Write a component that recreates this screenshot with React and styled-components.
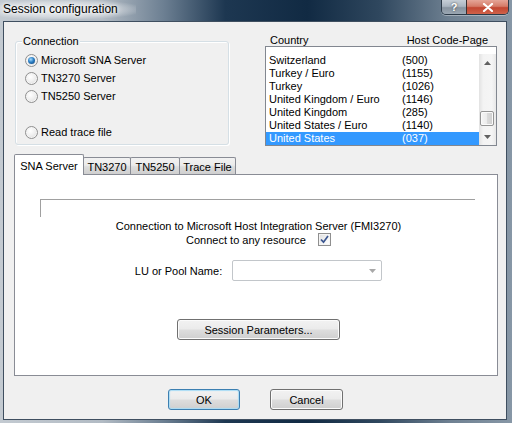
import React from 'react';
import styled, { createGlobalStyle } from 'styled-components';

const GlobalStyle = createGlobalStyle`
  html, body {
    margin: 0;
    padding: 0;
  }
  body {
    width: 512px;
    height: 423px;
    overflow: hidden;
    font-family: "Liberation Sans", Arial, sans-serif;
    font-size: 11px;
    color: #000;
  }
`;

const Window = styled.div`
  width: 512px;
  height: 423px;
  display: flex;
  flex-direction: column;
  box-sizing: border-box;
  background: linear-gradient(
    90deg,
    #c3cad1 0%,
    #b2bbc4 20%,
    #6c7f92 32%,
    #1d3751 44%,
    #112a43 60%,
    #2f475e 74%,
    #6f8192 88%,
    #8797a6 100%
  );
`;

const TitleBar = styled.div`
  height: 21px;
  display: flex;
  align-items: flex-start;
  flex-shrink: 0;
`;

const Title = styled.span`
  font-size: 12px;
  line-height: 19px;
  padding: 0 18px 0 3px;
  background: radial-gradient(ellipse at 45% 50%, rgba(255, 255, 255, 0.75) 0%, rgba(255, 255, 255, 0.35) 55%, rgba(255, 255, 255, 0) 80%);
  text-shadow: 0 0 6px #fff, 0 0 3px #fff;
`;

const CaptionButtons = styled.div`
  margin-left: auto;
  margin-right: 3px;
  display: flex;
  border: 1px solid #2c3a48;
  border-top: none;
  border-radius: 0 0 5px 5px;
  overflow: hidden;
  box-shadow: 0 1px 0 rgba(255, 255, 255, 0.35);
`;

const CaptionButton = styled.div`
  width: ${(p) => (p.$close ? 42 : 24)}px;
  height: 14px;
  display: flex;
  align-items: center;
  justify-content: center;
  box-sizing: border-box;
  color: #fff;
  font-weight: bold;
  font-size: 11px;
  line-height: 14px;
  text-shadow: 0 0 2px #333;
  border-left: ${(p) => (p.$close ? '1px solid #3a3030' : 'none')};
  background: ${(p) =>
    p.$close
      ? 'linear-gradient(#e5a597 0%, #d57b68 45%, #c24631 55%, #d0624a 100%)'
      : 'linear-gradient(#c6ced6 0%, #aab5c0 45%, #87939f 55%, #9ba7b3 100%)'};
`;

const Client = styled.div`
  flex: 1;
  margin: 0 5px 3px 3px;
  border: 1px solid #3f4f60;
  background: #f0f0f0;
  display: flex;
  flex-direction: column;
  padding: 0 8px 0 10px;
  box-sizing: border-box;
`;

const TopRow = styled.div`
  display: flex;
  align-items: flex-start;
`;

const GroupBox = styled.div`
  position: relative;
  margin: 19px 0 0 1px;
  width: 214px;
  height: 104px;
  box-sizing: border-box;
  border: 1px solid #d5dfe5;
  border-radius: 3px;
  box-shadow: inset 1px 1px 0 #fff, 1px 1px 0 #fff;
  padding: 9px 0 0 9px;
`;

const GroupLegend = styled.span`
  position: absolute;
  top: -7px;
  left: 6px;
  padding: 0 1px;
  line-height: 13px;
  background: #f0f0f0;
`;

const RadioRow = styled.label`
  display: flex;
  align-items: center;
  gap: 3px;
  height: 18px;
  margin-top: ${(p) => (p.$gap ? 18 : 0)}px;
`;

const RadioDot = styled.span`
  position: relative;
  width: 13px;
  height: 13px;
  box-sizing: border-box;
  border-radius: 50%;
  border: 1px solid #8f8f8f;
  background: radial-gradient(circle at 40% 35%, #ffffff 0%, #f0f0f0 45%, #d4d4d4 100%);
  box-shadow: inset 0 0 0 1px #f4f4f4;

  &::after {
    content: '';
    display: ${(p) => (p.$checked ? 'block' : 'none')};
    position: absolute;
    left: 2px;
    top: 2px;
    width: 7px;
    height: 7px;
    border-radius: 50%;
    background: radial-gradient(circle at 40% 35%, #a6dcff 0%, #2c7fc4 45%, #0f3e73 100%);
  }
`;

const RightColumn = styled.div`
  margin: 13px 0 0 36px;
  width: 232px;
  display: flex;
  flex-direction: column;
`;

const ListHeader = styled.div`
  display: flex;
  justify-content: space-between;
  height: 11px;
  line-height: 11px;
  padding: 0 9px 0 5px;
`;

const ListBox = styled.div`
  height: 100px;
  box-sizing: border-box;
  border: 1px solid #828790;
  background: #fff;
  padding-top: 7px;
  display: flex;
`;

const Rows = styled.div`
  flex: 1;
  display: flex;
  flex-direction: column;
`;

const Row = styled.div`
  display: flex;
  height: 13px;
  line-height: 13px;
  padding-left: 3px;
  background: ${(p) => (p.$selected ? '#3399ff' : 'transparent')};
  color: ${(p) => (p.$selected ? '#fff' : '#000')};
`;

const RowName = styled.span`
  width: 133px;
`;

const ScrollBar = styled.div`
  width: 17px;
  display: flex;
  flex-direction: column;
  background: linear-gradient(90deg, #e2e2e2 0%, #f3f3f3 25%, #f5f5f5 75%, #e8e8e8 100%);
`;

const ScrollArrow = styled.div`
  height: 17px;
  display: flex;
  align-items: center;
  justify-content: center;
`;

const Track = styled.div`
  flex: 1;
  display: flex;
  flex-direction: column;
`;

const Thumb = styled.div`
  margin: auto 2px 2px 1px;
  height: 15px;
  box-sizing: border-box;
  border: 1px solid #959595;
  border-radius: 2px;
  background: linear-gradient(90deg, #f6f6f6 0%, #ebebeb 50%, #dbdbdb 51%, #cfcfcf 100%);
  box-shadow: inset 0 0 0 1px #fafafa;
`;

const TabStrip = styled.div`
  margin-top: 8px;
  height: 21px;
  display: flex;
  align-items: flex-end;
  margin-bottom: -1px;
  position: relative;
  z-index: 1;
`;

const Tab = styled.div`
  width: ${(p) => p.$w}px;
  height: ${(p) => (p.$active ? 21 : 17)}px;
  margin-bottom: ${(p) => (p.$active ? 0 : 1)}px;
  margin-left: ${(p) => (p.$first ? 0 : -1)}px;
  box-sizing: border-box;
  border: 1px solid #898c95;
  border-bottom: none;
  border-radius: 2px 2px 0 0;
  display: flex;
  align-items: center;
  justify-content: center;
  padding-top: ${(p) => (p.$active ? 2 : 1)}px;
  background: ${(p) =>
    p.$active ? '#fff' : 'linear-gradient(#f2f2f2 0%, #ebebeb 45%, #dddddd 55%, #cfcfcf 100%)'};
`;

const Panel = styled.div`
  height: 202px;
  box-sizing: border-box;
  border: 1px solid #898c95;
  background: #fff;
  display: flex;
  flex-direction: column;
  align-items: center;
  padding-left: 5px;
`;

const SectionRule = styled.div`
  align-self: stretch;
  height: 18px;
  margin: 24px 22px 0 20px;
  box-sizing: border-box;
  border-top: 1px solid #a0a0a0;
  border-left: 1px solid #a0a0a0;
`;

const Caption = styled.div`
  margin-top: 3px;
  line-height: 13px;
`;

const FieldRow = styled.div`
  display: flex;
  align-items: center;
  gap: ${(p) => p.$gap}px;
  margin-top: ${(p) => p.$top}px;
`;

const CheckBox = styled.span`
  width: 13px;
  height: 13px;
  box-sizing: border-box;
  border: 1px solid #8f8f8f;
  background: linear-gradient(135deg, #dcdcdc 0%, #f5f5f5 60%, #ffffff 100%);
  box-shadow: inset 0 0 0 1px #f4f4f4;
  display: flex;
  align-items: center;
  justify-content: center;
`;

const Combo = styled.div`
  width: 150px;
  height: 21px;
  box-sizing: border-box;
  border: 1px solid #c2c6ca;
  border-radius: 2px;
  background: #fff;
  display: flex;
  align-items: center;
  justify-content: flex-end;
  padding-right: 5px;
`;

const PushButton = styled.div`
  width: ${(p) => p.$w}px;
  height: 21px;
  box-sizing: border-box;
  border: 1px solid ${(p) => (p.$default ? '#3c7fb1' : '#707070')};
  border-radius: 3px;
  background: linear-gradient(#f2f2f2 0%, #ebebeb 48%, #dddddd 52%, #cfcfcf 100%);
  box-shadow: ${(p) => (p.$default ? 'inset 0 0 1px 1px #a9dcf5' : 'inset 0 0 0 1px #fbfbfb')};
  display: flex;
  align-items: center;
  justify-content: center;
  margin-top: ${(p) => p.$top || 0}px;
  margin-left: ${(p) => p.$left || 0}px;
`;

const Footer = styled.div`
  margin-top: 13px;
  display: flex;
  justify-content: center;
  gap: 30px;
  padding-right: 1px;
`;

const Triangle = ({ down, color = '#606060' }) => (
  <svg width="7" height="4" viewBox="0 0 7 4">
    <path d={down ? 'M0 0 H7 L3.5 4 Z' : 'M0 4 H7 L3.5 0 Z'} fill={color} />
  </svg>
);

const countries = [
  ['Switzerland', '(500)'],
  ['Turkey / Euro', '(1155)'],
  ['Turkey', '(1026)'],
  ['United Kingdom / Euro', '(1146)'],
  ['United Kingdom', '(285)'],
  ['United States / Euro', '(1140)'],
  ['United States', '(037)'],
];

const tabs = [
  ['SNA Server', 70],
  ['TN3270', 48],
  ['TN5250', 50],
  ['Trace File', 57],
];

export default function App() {
  return (
    <>
      <GlobalStyle />
      <Window>
        <TitleBar>
          <Title>Session configuration</Title>
          <CaptionButtons>
            <CaptionButton>?</CaptionButton>
            <CaptionButton $close>
              <svg width="12" height="9" viewBox="0 0 12 9">
                <path d="M2 1 L10 8 M10 1 L2 8" stroke="#fff" strokeWidth="2.2" strokeLinecap="round" />
              </svg>
            </CaptionButton>
          </CaptionButtons>
        </TitleBar>
        <Client>
          <TopRow>
            <GroupBox>
              <GroupLegend>Connection</GroupLegend>
              <RadioRow>
                <RadioDot $checked />
                Microsoft SNA Server
              </RadioRow>
              <RadioRow>
                <RadioDot />
                TN3270 Server
              </RadioRow>
              <RadioRow>
                <RadioDot />
                TN5250 Server
              </RadioRow>
              <RadioRow $gap>
                <RadioDot />
                Read trace file
              </RadioRow>
            </GroupBox>
            <RightColumn>
              <ListHeader>
                <span>Country</span>
                <span>Host Code-Page</span>
              </ListHeader>
              <ListBox>
                <Rows>
                  {countries.map(([name, code], i) => (
                    <Row key={name} $selected={i === countries.length - 1}>
                      <RowName>{name}</RowName>
                      <span>{code}</span>
                    </Row>
                  ))}
                </Rows>
                <ScrollBar>
                  <ScrollArrow>
                    <Triangle />
                  </ScrollArrow>
                  <Track>
                    <Thumb />
                  </Track>
                  <ScrollArrow>
                    <Triangle down />
                  </ScrollArrow>
                </ScrollBar>
              </ListBox>
            </RightColumn>
          </TopRow>

          <TabStrip>
            {tabs.map(([label, w], i) => (
              <Tab key={label} $w={w} $active={i === 0} $first={i === 0}>
                {label}
              </Tab>
            ))}
          </TabStrip>
          <Panel>
            <SectionRule />
            <Caption>Connection to Microsoft Host Integration Server (FMI3270)</Caption>
            <FieldRow $gap={12} $top={0}>
              <span>Connect to any resource</span>
              <CheckBox>
                <svg width="9" height="9" viewBox="0 0 9 9">
                  <path d="M1 4.5 L3.5 7.2 L8 1" fill="none" stroke="#3a558f" strokeWidth="1.7" />
                </svg>
              </CheckBox>
            </FieldRow>
            <FieldRow $gap={10} $top={14}>
              <span>LU or Pool Name:</span>
              <Combo>
                <Triangle down color="#a8a8a8" />
              </Combo>
            </FieldRow>
            <PushButton $w={163} $top={38}>
              Session Parameters...
            </PushButton>
          </Panel>

          <Footer>
            <PushButton $w={72} $default>
              OK
            </PushButton>
            <PushButton $w={73}>Cancel</PushButton>
          </Footer>
        </Client>
      </Window>
    </>
  );
}
